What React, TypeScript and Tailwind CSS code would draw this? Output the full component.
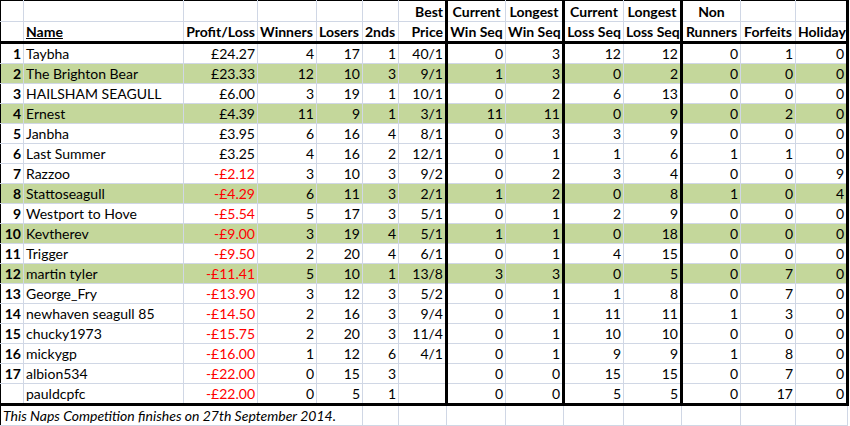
import React from "react";

type Row = {
  rank: string;
  name: string;
  pl: string;
  win: string;
  lose: string;
  second: string;
  best: string;
  cws: string;
  lws: string;
  cls: string;
  lls: string;
  nr: string;
  forf: string;
  hol: string;
  green?: boolean;
};

const raw: (string | boolean)[][] = [
  ["1", "Taybha", "£24.27", "4", "17", "1", "40/1", "0", "3", "12", "12", "0", "1", "0", false],
  ["2", "The Brighton Bear", "£23.33", "12", "10", "3", "9/1", "1", "3", "0", "2", "0", "0", "0", true],
  ["3", "HAILSHAM SEAGULL", "£6.00", "3", "19", "1", "10/1", "0", "2", "6", "13", "0", "0", "0", false],
  ["4", "Ernest", "£4.39", "11", "9", "1", "3/1", "11", "11", "0", "9", "0", "2", "0", true],
  ["5", "Janbha", "£3.95", "6", "16", "4", "8/1", "0", "3", "3", "9", "0", "0", "0", false],
  ["6", "Last Summer", "£3.25", "4", "16", "2", "12/1", "0", "1", "1", "6", "1", "1", "0", false],
  ["7", "Razzoo", "-£2.12", "3", "10", "3", "9/2", "0", "2", "3", "4", "0", "0", "9", false],
  ["8", "Stattoseagull", "-£4.29", "6", "11", "3", "2/1", "1", "2", "0", "8", "1", "0", "4", true],
  ["9", "Westport to Hove", "-£5.54", "5", "17", "3", "5/1", "0", "1", "2", "9", "0", "0", "0", false],
  ["10", "Kevtherev", "-£9.00", "3", "19", "4", "5/1", "1", "1", "0", "18", "0", "0", "0", true],
  ["11", "Trigger", "-£9.50", "2", "20", "4", "6/1", "0", "1", "4", "15", "0", "0", "0", false],
  ["12", "martin tyler", "-£11.41", "5", "10", "1", "13/8", "3", "3", "0", "5", "0", "7", "0", true],
  ["13", "George_Fry", "-£13.90", "3", "12", "3", "5/2", "0", "1", "1", "8", "0", "7", "0", false],
  ["14", "newhaven seagull 85", "-£14.50", "2", "16", "3", "9/4", "0", "1", "11", "11", "1", "3", "0", false],
  ["15", "chucky1973", "-£15.75", "2", "20", "3", "11/4", "0", "1", "10", "10", "0", "0", "0", false],
  ["16", "mickygp", "-£16.00", "1", "12", "6", "4/1", "0", "1", "9", "9", "1", "8", "0", false],
  ["17", "albion534", "-£22.00", "0", "15", "3", "", "0", "0", "15", "15", "0", "7", "0", false],
  ["", "pauldcpfc", "-£22.00", "0", "5", "1", "", "0", "0", "5", "5", "0", "17", "0", false],
];

const rows: Row[] = raw.map((r) => ({
  rank: r[0] as string,
  name: r[1] as string,
  pl: r[2] as string,
  win: r[3] as string,
  lose: r[4] as string,
  second: r[5] as string,
  best: r[6] as string,
  cws: r[7] as string,
  lws: r[8] as string,
  cls: r[9] as string,
  lls: r[10] as string,
  nr: r[11] as string,
  forf: r[12] as string,
  hol: r[13] as string,
  green: r[14] as boolean,
}));

const widths = [23, 160, 74, 59, 46, 36, 48, 59, 58, 60, 58, 59, 55, 52];

// base cell
const c =
  "border border-[#d0d7e5] px-[2px] py-0 leading-[19px] whitespace-nowrap overflow-hidden";
// header cell
const h =
  "border border-[#d0d7e5] h-[21px] px-[2px] py-0 leading-[19px] whitespace-nowrap overflow-hidden";
const hb = `${h} border-b-[3px] border-b-black`;

export default function App() {
  return (
    <div
      className="w-[850px] h-[426px] bg-white text-black overflow-hidden"
      style={{ fontFamily: "Lato, 'Liberation Sans', sans-serif", fontSize: 14 }}
    >
      <table className="table-fixed border-collapse w-[848px]">
        <colgroup>
          {widths.map((w, i) => (
            <col key={i} style={{ width: w }} />
          ))}
        </colgroup>
        <thead>
          <tr className="font-bold">
            <td className={`${h} border-t-black border-l-black`}></td>
            <td className={`${h} border-t-black`}></td>
            <td className={`${h} border-t-black`}></td>
            <td className={`${h} border-t-black`}></td>
            <td className={`${h} border-t-black`}></td>
            <td className={`${h} border-t-black`}></td>
            <td className={`${h} border-t-black text-right border-r-[3px] border-r-black`}>Best</td>
            <td className={`${h} border-t-black text-center`}>Current</td>
            <td className={`${h} border-t-black text-center border-r-[3px] border-r-black`}>Longest</td>
            <td className={`${h} border-t-black text-center`}>Current</td>
            <td className={`${h} border-t-black text-center border-r-[3px] border-r-black`}>Longest</td>
            <td className={`${h} border-t-black text-center`}>Non</td>
            <td className={`${h} border-t-black`}></td>
            <td className={`${h} border-t-black border-r-[3px] border-r-black`}></td>
          </tr>
          <tr className="font-bold">
            <td className={`${hb} border-l-black`}></td>
            <td className={hb}>
              <span className="underline">Name</span>
            </td>
            <td className={`${hb} text-right`}>Profit/Loss</td>
            <td className={`${hb} text-left`}>Winners</td>
            <td className={`${hb} text-left`}>Losers</td>
            <td className={`${hb} text-left`}>2nds</td>
            <td className={`${hb} text-right border-r-[3px] border-r-black`}>Price</td>
            <td className={`${hb} text-center`}>Win Seq</td>
            <td className={`${hb} text-center border-r-[3px] border-r-black`}>Win Seq</td>
            <td className={`${hb} text-center`}>Loss Seq</td>
            <td className={`${hb} text-center border-r-[3px] border-r-black`}>Loss Seq</td>
            <td className={`${hb} text-center`}>Runners</td>
            <td className={`${hb} text-center`}>Forfeits</td>
            <td className={`${hb} text-center border-r-[3px] border-r-black`}>Holiday</td>
          </tr>
        </thead>
        <tbody>
          {rows.map((r, i) => {
            const last = i === rows.length - 1;
            const bg = r.green ? "bg-[#c4d79b]" : "bg-white";
            const b = last ? "border-b-[3px] border-b-black" : "";
            const neg = r.pl.startsWith("-");
            return (
              <tr key={i} className={`${bg} h-[20px]`}>
                <td className={`${c} ${b} border-l-black text-right font-bold`}>{r.rank}</td>
                <td className={`${c} ${b}`}>{r.name}</td>
                <td className={`${c} ${b} text-right ${neg ? "text-[#ff0000]" : ""}`}>{r.pl}</td>
                <td className={`${c} ${b} text-right`}>{r.win}</td>
                <td className={`${c} ${b} text-right`}>{r.lose}</td>
                <td className={`${c} ${b} text-right`}>{r.second}</td>
                <td className={`${c} ${b} text-right border-r-[3px] border-r-black`}>{r.best}</td>
                <td className={`${c} ${b} text-right`}>{r.cws}</td>
                <td className={`${c} ${b} text-right border-r-[3px] border-r-black`}>{r.lws}</td>
                <td className={`${c} ${b} text-right`}>{r.cls}</td>
                <td className={`${c} ${b} text-right border-r-[3px] border-r-black`}>{r.lls}</td>
                <td className={`${c} ${b} text-right`}>{r.nr}</td>
                <td className={`${c} ${b} text-right`}>{r.forf}</td>
                <td className={`${c} ${b} text-right border-r-[3px] border-r-black`}>{r.hol}</td>
              </tr>
            );
          })}
          {/* footer note */}
          <tr>
            <td colSpan={5} className={`${h} border-l-black italic overflow-visible`}>
              This Naps Competition finishes on 27th September 2014.
            </td>
            <td className={h}></td>
            <td className={h}></td>
            <td className={h}></td>
            <td className={h}></td>
            <td className={h}></td>
            <td className={h}></td>
            <td className={h}></td>
            <td className={h}></td>
            <td className={h}></td>
          </tr>
        </tbody>
      </table>
    </div>
  );
}
